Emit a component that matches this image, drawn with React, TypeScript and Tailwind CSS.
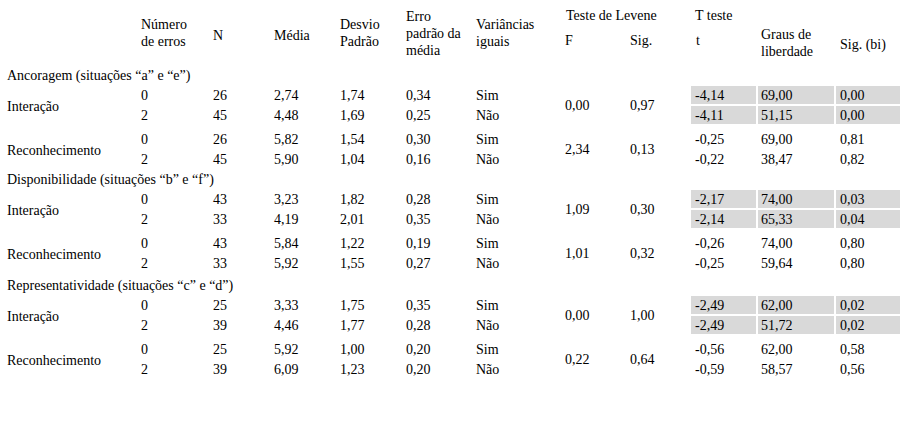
import React from "react";

type Row = { n: string; count: string; mean: string; sd: string; se: string; eq: string; t: string; df: string; sig: string };
type Sub = { label: string; f: string; fsig: string; shaded: boolean; rows: Row[]; mt: string };
type Section = { title: string; mt: string; subs: Sub[] };

const r = (n: string, count: string, mean: string, sd: string, se: string, eq: string, t: string, df: string, sig: string): Row => ({
  n, count, mean, sd, se, eq, t, df, sig,
});

const sections: Section[] = [
  {
    title: "Ancoragem (situações “a” e “e”)",
    mt: "mt-0",
    subs: [
      {
        label: "Interação", f: "0,00", fsig: "0,97", shaded: true, mt: "mt-0",
        rows: [r("0", "26", "2,74", "1,74", "0,34", "Sim", "-4,14", "69,00", "0,00"), r("2", "45", "4,48", "1,69", "0,25", "Não", "-4,11", "51,15", "0,00")],
      },
      {
        label: "Reconhecimento", f: "2,34", fsig: "0,13", shaded: false, mt: "mt-[4px]",
        rows: [r("0", "26", "5,82", "1,54", "0,30", "Sim", "-0,25", "69,00", "0,81"), r("2", "45", "5,90", "1,04", "0,16", "Não", "-0,22", "38,47", "0,82")],
      },
    ],
  },
  {
    title: "Disponibilidade (situações “b” e “f”)",
    mt: "mt-0",
    subs: [
      {
        label: "Interação", f: "1,09", fsig: "0,30", shaded: true, mt: "mt-0",
        rows: [r("0", "43", "3,23", "1,82", "0,28", "Sim", "-2,17", "74,00", "0,03"), r("2", "33", "4,19", "2,01", "0,35", "Não", "-2,14", "65,33", "0,04")],
      },
      {
        label: "Reconhecimento", f: "1,01", fsig: "0,32", shaded: false, mt: "mt-[4px]",
        rows: [r("0", "43", "5,84", "1,22", "0,19", "Sim", "-0,26", "74,00", "0,80"), r("2", "33", "5,92", "1,55", "0,27", "Não", "-0,25", "59,64", "0,80")],
      },
    ],
  },
  {
    title: "Representatividade (situações “c” e “d”)",
    mt: "mt-[2px]",
    subs: [
      {
        label: "Interação", f: "0,00", fsig: "1,00", shaded: true, mt: "mt-0",
        rows: [r("0", "25", "3,33", "1,75", "0,35", "Sim", "-2,49", "62,00", "0,02"), r("2", "39", "4,46", "1,77", "0,28", "Não", "-2,49", "51,72", "0,02")],
      },
      {
        label: "Reconhecimento", f: "0,22", fsig: "0,64", shaded: false, mt: "mt-[4px]",
        rows: [r("0", "25", "5,92", "1,00", "0,20", "Sim", "-0,56", "62,00", "0,58"), r("2", "39", "6,09", "1,23", "0,20", "Não", "-0,59", "58,57", "0,56")],
      },
    ],
  },
];

function SubGroup({ sub }: { sub: Sub }) {
  const shade = sub.shaded ? "bg-[#d9d9d9]" : "";
  return (
    <div className={`flex ${sub.mt}`}>
      <div className="flex w-[141px] items-center pl-[7px] pt-[2px]">{sub.label}</div>
      <div className="flex flex-col">
        {sub.rows.map((row, i) => (
          <div key={i} className="flex h-[20px] items-center pt-[1px]">
            <div className="w-[72px]">{row.n}</div>
            <div className="w-[61px]">{row.count}</div>
            <div className="w-[66px]">{row.mean}</div>
            <div className="w-[66px]">{row.sd}</div>
            <div className="w-[70px]">{row.se}</div>
            <div className="w-[89px]">{row.eq}</div>
          </div>
        ))}
      </div>
      <div className="flex w-[65px] items-center pt-[1px]">{sub.f}</div>
      <div className="flex w-[61px] items-center pt-[1px]">{sub.fsig}</div>
      <div className="flex flex-col">
        {sub.rows.map((row, i) => (
          <div key={i} className="flex h-[20px] py-[1px]">
            <div className="w-[67px] pr-[2px]">
              <div className={`flex h-full items-center pl-[4px] ${shade}`}>{row.t}</div>
            </div>
            <div className="w-[78px] pr-[2px]">
              <div className={`flex h-full items-center pl-[3px] ${shade}`}>{row.df}</div>
            </div>
            <div className="w-[64px]">
              <div className={`flex h-full items-center pl-[4px] ${shade}`}>{row.sig}</div>
            </div>
          </div>
        ))}
      </div>
    </div>
  );
}

export default function App() {
  return (
    <div className="h-[422px] w-[906px] bg-white text-[14px] leading-[17px] text-black" style={{ fontFamily: '"Liberation Serif", "Times New Roman", serif' }}>
      <div className="flex h-[65px]">
        <div className="w-[141px]" />
        <div className="w-[72px] pt-[16px]">Número<br />de erros</div>
        <div className="w-[61px] pt-[27px]">N</div>
        <div className="w-[66px] pt-[27px]">Média</div>
        <div className="w-[66px] pt-[16px]">Desvio<br />Padrão</div>
        <div className="w-[70px] whitespace-nowrap pt-[8px]">Erro<br />padrão da<br />média</div>
        <div className="w-[89px] pt-[16px]">Variâncias<br />iguais</div>
        <div className="w-[126px] pt-[7px]">
          <div className="pl-[1px]">Teste de Levene</div>
          <div className="mt-[8px] flex">
            <div className="w-[65px]">F</div>
            <div className="w-[61px]">Sig.</div>
          </div>
        </div>
        <div className="w-[209px] pt-[7px]">
          <div className="pl-[4px]">T teste</div>
          <div className="flex">
            <div className="w-[67px] pl-[5px] pt-[8px]">t</div>
            <div className="w-[78px] pl-[3px] pt-[2px]">Graus de<br />liberdade</div>
            <div className="w-[64px] pl-[4px] pt-[12px]">Sig. (bi)</div>
          </div>
        </div>
      </div>
      {sections.map((s, i) => (
        <div key={i} className={s.mt}>
          <div className="flex h-[20px] items-center pl-[7px]">{s.title}</div>
          {s.subs.map((sub, j) => (
            <SubGroup key={j} sub={sub} />
          ))}
        </div>
      ))}
    </div>
  );
}
